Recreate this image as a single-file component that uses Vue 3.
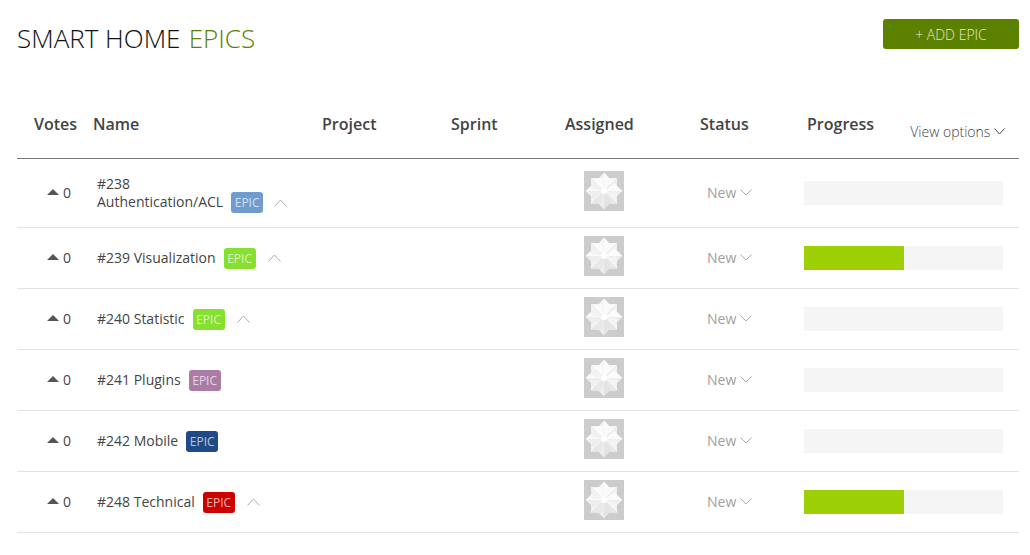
<script setup>
const epics = [
  { id: 238, name: "Authentication/ACL", color: "#6f9bd1", progress: 0, open: true, wrap: true },
  { id: 239, name: "Visualization", color: "#86e02f", progress: 50, open: true },
  { id: 240, name: "Statistic", color: "#86e02f", progress: 0, open: true },
  { id: 241, name: "Plugins", color: "#a97ba5", progress: 0 },
  { id: 242, name: "Mobile", color: "#204a87", progress: 0 },
  { id: 248, name: "Technical", color: "#cc0000", progress: 50, open: true },
];

// placeholder avatar petals, the lower ones are a bit darker
const petals = [
  { angle: 0, left: "#f4f4f4", right: "#fcfcfc" },
  { angle: 45, left: "#fafafa", right: "#f2f2f2" },
  { angle: 90, left: "#fbfbfb", right: "#eeeeee" },
  { angle: 135, left: "#f4f4f4", right: "#e8e8e8" },
  { angle: 180, left: "#e4e4e4", right: "#eeeeee" },
  { angle: 225, left: "#e8e8e8", right: "#f4f4f4" },
  { angle: 270, left: "#eeeeee", right: "#fafafa" },
  { angle: 315, left: "#f2f2f2", right: "#fbfbfb" },
];
</script>

<template>
  <main class="page">
    <header class="top">
      <h1>SMART HOME <span>EPICS</span></h1>
      <button class="add">+ ADD EPIC</button>
    </header>

    <div class="table">
      <div class="row head">
        <div class="votes-head">Votes</div>
        <div>Name</div>
        <div class="project-head">Project</div>
        <div>Sprint</div>
        <div>Assigned</div>
        <div>Status</div>
        <div class="progress-head">
          <span>Progress</span>
          <span class="view">
            View options
            <svg width="11" height="7" viewBox="0 0 11 7"><path d="M.5.5 5.5 6l5-5.5" fill="none" stroke="#444" /></svg>
          </span>
        </div>
      </div>

      <div v-for="epic in epics" :key="epic.id" class="row item" :class="{ tall: epic.wrap }">
        <div class="votes"><i class="up"></i>0</div>
        <div class="name" :class="{ wrap: epic.wrap }">
          <span class="title"><span class="num">#{{ epic.id }}</span> {{ epic.name }}</span>
          <span class="badge" :style="{ background: epic.color }">EPIC</span>
          <svg v-if="epic.open" class="fold" width="13" height="8" viewBox="0 0 13 8"><path d="M.5 7.5 6.5 1l6 6.5" fill="none" stroke="#aaa" /></svg>
        </div>
        <div></div>
        <div></div>
        <div class="assigned">
          <svg class="avatar" width="40" height="40" viewBox="0 0 40 40">
            <rect width="40" height="40" fill="#ccc" />
            <g v-for="p in petals" :key="p.angle" :transform="`rotate(${p.angle} 20 20)`">
              <path d="M20 20 20 1.5 12.5 9.5z" :fill="p.left" />
              <path d="M20 20 20 1.5 27.5 9.5z" :fill="p.right" />
            </g>
            <circle cx="20" cy="20" r="3" fill="#fff" />
          </svg>
        </div>
        <div class="status">
          New
          <svg width="12" height="7" viewBox="0 0 12 7"><path d="M.5.5 6 6 11.5.5" fill="none" stroke="#aaa" /></svg>
        </div>
        <div class="bar">
          <div class="fill" :style="{ width: epic.progress + '%' }"></div>
        </div>
      </div>
    </div>
  </main>
</template>

<style scoped>
.page {
  width: 1030px;
  padding: 19px 11px 0 17px;
  box-sizing: border-box;
  font-family: "Open Sans", sans-serif;
  color: #444;
}

.top {
  display: flex;
  justify-content: space-between;
  align-items: flex-start;
  height: 58px;
}

h1 {
  margin: 0;
  padding-top: 1px;
  font-size: 26px;
  line-height: 36px;
  font-weight: 300;
  color: #111;
}

h1 span {
  margin-left: 1.5px;
  color: #5c8000;
}

.add {
  width: 136px;
  height: 30px;
  border: none;
  border-radius: 3px;
  background: #5c8000;
  color: #e3ebcc;
  font-family: inherit;
  font-size: 14px;
  font-weight: 300;
}

.row {
  display: grid;
  grid-template-columns: 76px 229px 129px 114px 135px 104px 215px;
}

.head {
  height: 82px;
  align-items: end;
  border-bottom: 1px solid #777;
  font-size: 16px;
  font-weight: 600;
  line-height: 22px;
  padding-bottom: 23px;
  box-sizing: border-box;
}

.votes-head {
  padding-left: 17px;
}

.progress-head {
  display: flex;
  justify-content: space-between;
  align-items: flex-start;
  padding: 0 14px 0 3px;
}

.view {
  margin: 8px 0 -8px;
  font-size: 14px;
  font-weight: 300;
}

.view svg {
  vertical-align: 2px;
}

.item {
  height: 61px;
  align-items: center;
  box-sizing: border-box;
  border-bottom: 1px solid #e3e3e3;
  font-size: 14px;
}

.tall {
  height: 69px;
}

.votes {
  display: flex;
  align-items: center;
  margin-bottom: 2px;
  padding-left: 30px;
}

.up {
  width: 0;
  height: 0;
  margin-right: 4px;
  border-left: 6px solid transparent;
  border-right: 6px solid transparent;
  border-bottom: 6px solid #555;
}

.name {
  display: flex;
  align-items: center;
  padding-left: 4px;
}

.name.wrap {
  display: block;
  line-height: 18px;
  padding-top: 2px;
}

.wrap .num {
  display: block;
  margin-bottom: -1px;
}

.wrap .fold {
  margin-left: 11px;
}

.title {
  margin: 0 8px 2px 0;
}

.badge {
  display: inline-block;
  width: 32px;
  height: 21px;
  border-radius: 3px;
  color: rgba(255, 255, 255, 0.7);
  font-size: 12px;
  font-weight: 400;
  line-height: 21px;
  text-align: center;
}

.fold {
  margin-left: 12px;
}

.avatar {
  display: block;
  margin: 0 0 4px 19px;
}

.status {
  margin-bottom: 2px;
  padding-left: 7px;
  color: #a0a0a0;
}

.status svg {
  vertical-align: 2px;
}

.bar {
  width: 199px;
  height: 24px;
  background: #f5f5f5;
}

.fill {
  height: 100%;
  background: #9dcf05;
}
</style>
